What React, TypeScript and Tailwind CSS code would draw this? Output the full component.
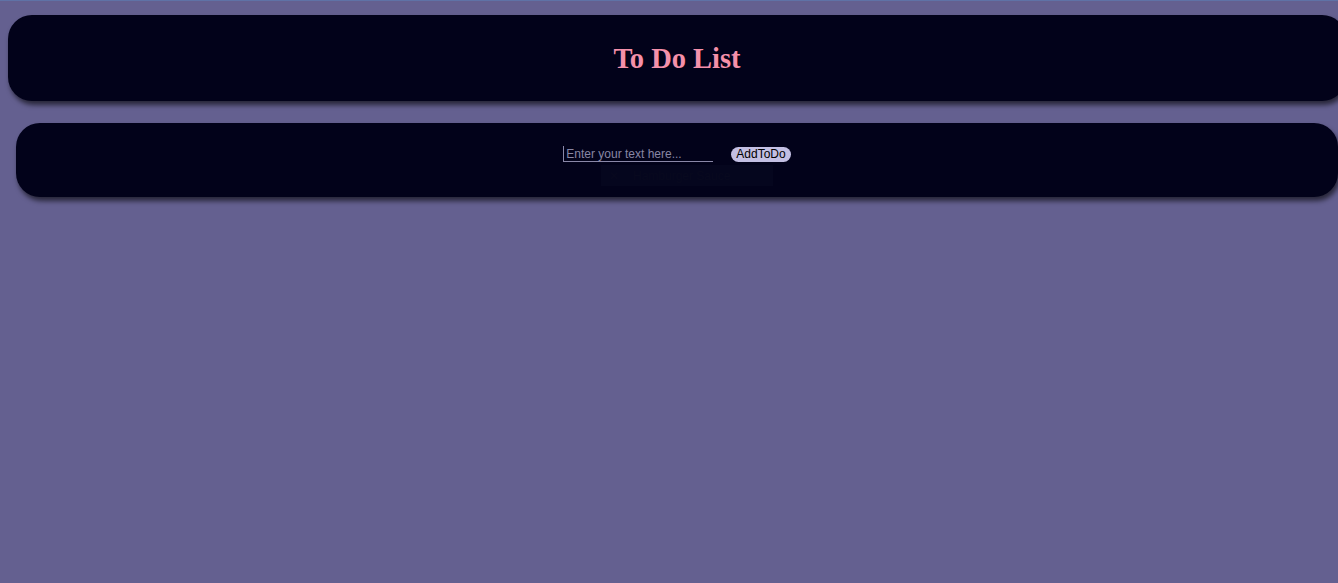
export default function App() {
  return (
    <div className="w-[1338px] min-h-[583px] overflow-hidden bg-[#646090] border-t border-[#5f72a6] font-['Liberation_Sans',Arial,sans-serif]">
      <div className="ml-[8px] mt-[14px] w-[1338px] h-[86px] rounded-[24px] bg-[#02021a] shadow-[2px_4px_5px_rgba(0,0,0,0.6)] flex items-center justify-center pt-[2px]">
        <h1 className="font-['Liberation_Serif','Times_New_Roman',serif] font-bold text-[28.5px] text-[#f590aa] leading-none">
          To Do List
        </h1>
      </div>
      <div className="ml-[16px] mt-[22px] w-[1322px] h-[74px] rounded-[24px] bg-[#02021a] shadow-[2px_4px_5px_rgba(0,0,0,0.6)] flex flex-col items-center pt-[23px]">
        <div className="flex items-center gap-[18px] ml-[0px]">
          <input
            type="text"
            placeholder="Enter your text here..."
            className="w-[150px] h-[16px] bg-transparent border-l border-b border-[#8a88a8] text-[12px] pl-[2px] text-[#c0c0d0] placeholder:text-[#8886a4] outline-none"
          />
          <button className="h-[15px] px-[5px] rounded-full bg-[#c3bfe3] text-[12px] leading-[15px] text-black">
            AddToDo
          </button>
        </div>
        <div className="mt-[3px] ml-[20px] w-[172px] h-[21px] bg-[#05061e] flex items-center px-[8px] gap-[14px] text-[12px] text-[#08091f]">
          <span>✕</span>
          <span>Hamburger Sauce</span>
        </div>
      </div>
    </div>
  );
}
